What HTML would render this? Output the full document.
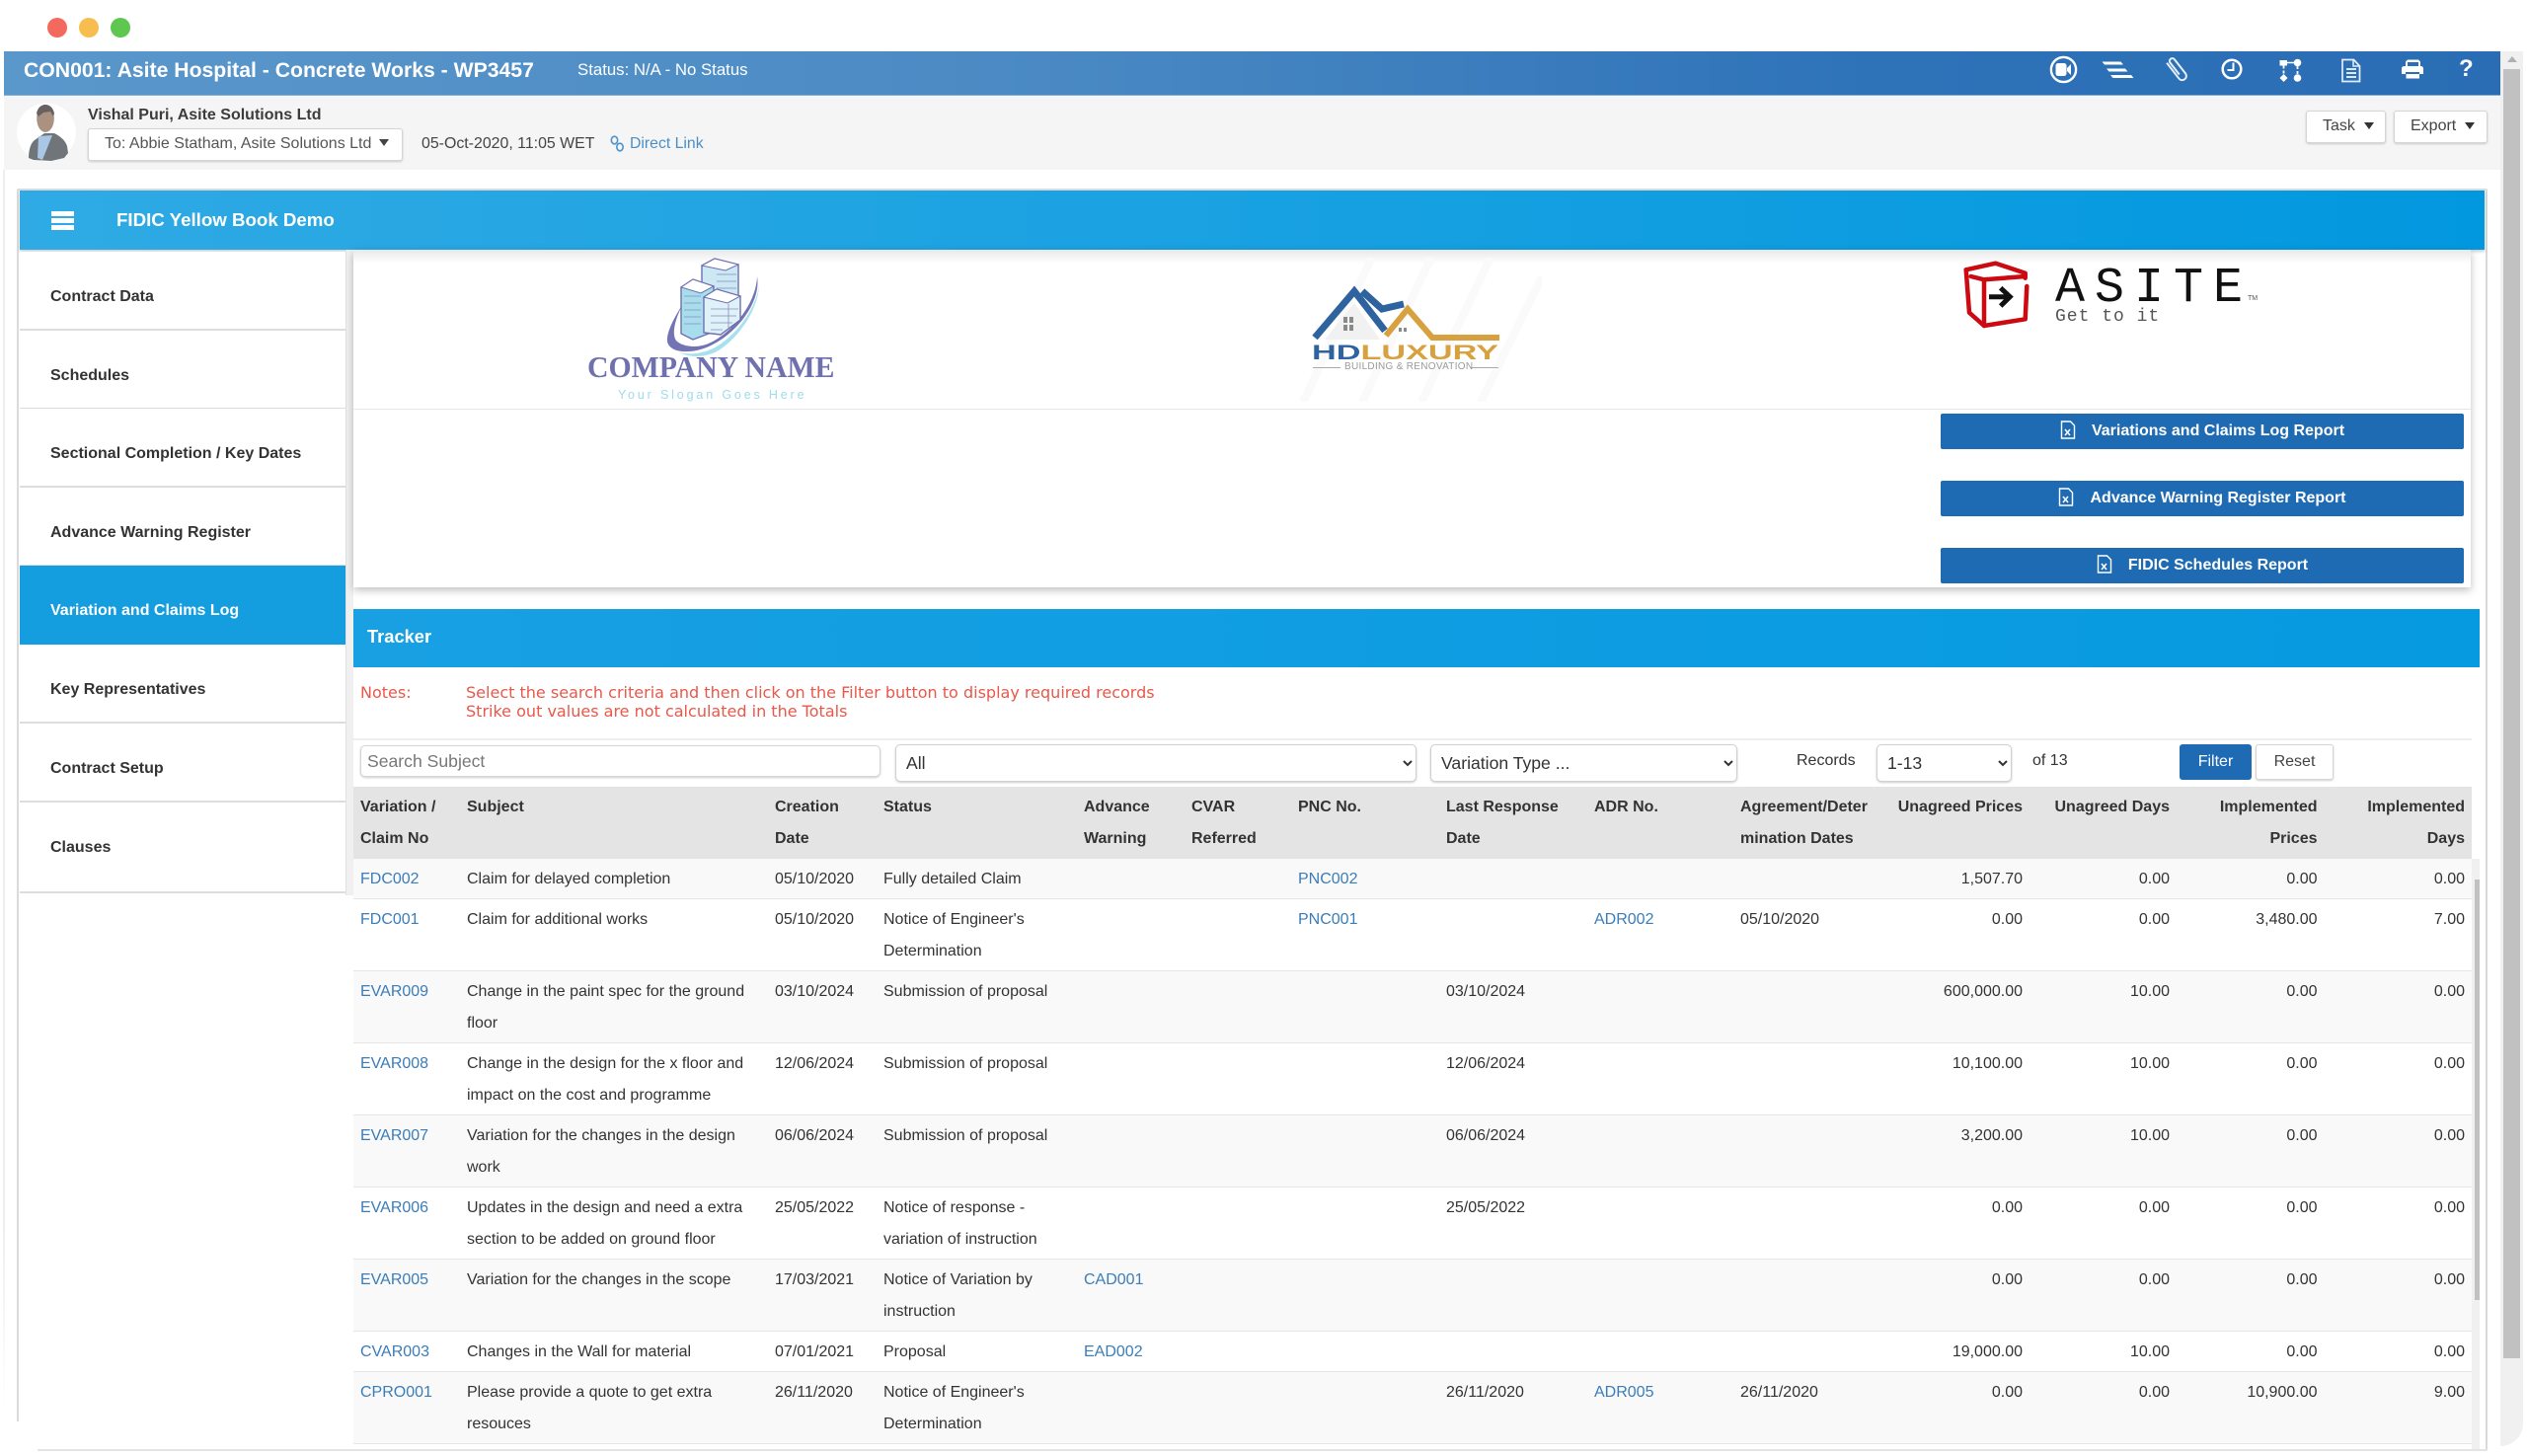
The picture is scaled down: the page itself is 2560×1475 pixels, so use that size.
<!DOCTYPE html>
<html lang="en"><head><meta charset="utf-8"><title>Asite Hospital - Concrete Works</title>
<style>
*{box-sizing:border-box}
html,body{margin:0;padding:0;background:#fff}
body{width:2560px;height:1475px;position:relative;overflow:hidden;font-family:"Liberation Sans",Arial,sans-serif;font-size:16px;color:#333;filter:blur(.35px)}
.a{position:absolute;white-space:nowrap}
a{color:#3a7db8;text-decoration:none}
.caret{display:inline-block;width:0;height:0;border-left:5.5px solid transparent;border-right:5.5px solid transparent;border-top:7px solid #333}
.wbtn{position:absolute;background:#fff;border:1px solid #d5d5d5;border-radius:3px;box-shadow:0 1px 2px rgba(0,0,0,.18)}
.side{position:absolute;left:20px;width:330px;height:80px;border-bottom:2px solid #ddd;font-weight:700;font-size:16px;padding-left:31px;color:#333;background:#fff;padding-top:19px;line-height:54px}
.rb{position:absolute;left:1966px;width:530px;height:36px;background:#1f6bb3;border-radius:2px;color:#fff;font-weight:700;font-size:16px;line-height:36px;text-align:center}
.rb svg{vertical-align:-4px;margin-right:16px}
select{font-family:"Liberation Sans",Arial,sans-serif;font-size:17.6px;color:#333;background:#fff;border:1px solid #d0d0d0;border-radius:5px;box-shadow:0 1px 2px rgba(0,0,0,.2);position:absolute;padding-left:6px}
table{position:absolute;left:358px;top:797px;width:2146px;border-collapse:collapse;table-layout:fixed;font-size:16px}
th,td{padding:5px 7px 3px;line-height:32px;text-align:left;vertical-align:top;white-space:nowrap;overflow:hidden}
th{background:#e4e4e4;font-weight:700;height:73px;padding-bottom:4px}
td{border-bottom:1px solid #e6e6e6}
tr.s td{background:#f9f9f9}
.r{text-align:right}
</style></head><body>

<!-- window dots -->
<div class="a" style="left:48px;top:18px;width:20px;height:20px;border-radius:50%;background:#f3695d"></div>
<div class="a" style="left:80px;top:18px;width:20px;height:20px;border-radius:50%;background:#f7bd4f"></div>
<div class="a" style="left:112px;top:18px;width:20px;height:20px;border-radius:50%;background:#5dc750"></div>

<!-- outer left fade line -->
<div class="a" style="left:3px;top:172px;width:2px;height:1260px;background:linear-gradient(#eee 85%,#fff)"></div>

<!-- top blue header -->
<div class="a" style="left:4px;top:52px;width:2530px;height:45px;background:linear-gradient(90deg,#5a97cb,#4b8ac4 40%,#2e72b8 75%,#2a6db4);border-bottom:1px solid #7fb0dc"></div>
<div class="a" style="left:24px;top:59px;color:#fff;font-weight:700;font-size:21.2px;line-height:26px">CON001: Asite Hospital - Concrete Works - WP3457</div>
<div class="a" style="left:585px;top:60px;color:#fff;font-size:16.8px;line-height:22px">Status: N/A - No Status</div>

<svg class="a" style="left:2070px;top:52px" width="450" height="44" viewBox="0 0 450 44">
 <circle cx="20.5" cy="18.5" r="12.6" fill="none" stroke="#fff" stroke-width="2.4"/>
 <rect x="12.5" y="12" width="11" height="13" rx="2.5" fill="#fff"/><path d="M24 17l4-4v11l-4-4z" fill="#fff"/>
 <path d="M59.5 10.5h19l2.500 3h-19zM64 17.500h19l2.500 3h-19zM68 24h21l2.500 3h-21z" fill="#fff"/>
 <g transform="rotate(-38 135 18)" fill="none" stroke="#e6eff8" stroke-width="2"><path d="M131 7v20a4.200 4.200 0 0 0 8.400 0V9a2.800 2.800 0 0 0-5.600 0v15"/></g>
 <circle cx="191" cy="18" r="9.300" fill="none" stroke="#fff" stroke-width="2.500"/><path d="M192.500 11.500v7.500h-6" fill="none" stroke="#fff" stroke-width="2"/>
 <rect x="239.500" y="9" width="7.500" height="5.500" fill="#fff"/><circle cx="257.500" cy="11.500" r="3.800" fill="#fff"/><path d="M247 11.500h7" stroke="#fff" stroke-width="1.500"/>
 <path d="M243.500 14.500v9M257.500 15v8" stroke="#fff" stroke-width="1.800" stroke-dasharray="3 2"/>
 <path d="M243.500 23l4 4-4 4-4-4z" fill="#fff"/><circle cx="257.500" cy="27" r="3.800" fill="#fff"/>
 <path d="M303 8.500h11.500l6 6.500v15.500h-17.500z" fill="none" stroke="#e4eef8" stroke-width="1.700"/><path d="M314 8.500v6.500h6.500" fill="none" stroke="#e4eef8" stroke-width="1.500"/>
 <path d="M307 17h10v2h-10zM307 21h10v2h-10zM307 25h10v2h-10z" fill="#dce9f5"/>
 <path d="M369 8.500h11l2 2v6h-2v-5.500h-11v5.500h-2v-6zM363 17.500c0-2 1.500-2.500 3-2.500h16c2 0 3 .8 3 2.500v5.500h-4v-2h-14v2h-4zM367.500 23h13.500v4.500h-13.500z" fill="#fff"/>
</svg>
<div class="a" style="left:2491px;top:55px;color:#fff;font-weight:700;font-size:24px;line-height:30px">?</div>

<!-- gray bar -->
<div class="a" style="left:4px;top:97px;width:2531px;height:75px;background:#f5f5f5"></div>
<svg class="a" style="left:16px;top:104px" width="62" height="62" viewBox="0 0 62 62">
 <ellipse cx="31" cy="30" rx="30" ry="29.500" fill="#fff"/>
 <path d="M13 56c0-8 2-15 6-18l10-7h10c6 3 11 7 13 13l1 7-4 5-13 3-18-1z" fill="#6f7579"/>
 <path d="M23 34l14-1-10 25-5-2z" fill="#a9c6e4"/>
 <ellipse cx="30" cy="16" rx="8.800" ry="14" fill="#ab917f"/>
 <path d="M21 11c1-6 5-9 9-9s8 3 9 9l-1 3-3-5-7 1-5 4z" fill="#67625f"/>
</svg>
<div class="a" style="left:89px;top:106px;font-weight:700;font-size:16px;line-height:22px;color:#3c3c3c">Vishal Puri, Asite Solutions Ltd</div>
<div class="wbtn" style="left:89px;top:130px;width:319px;height:33px"></div>
<div class="a" style="left:106px;top:135px;font-size:16px;line-height:22px;color:#555">To: Abbie Statham, Asite Solutions Ltd</div>
<span class="caret a" style="left:384px;top:141px;border-top-color:#444"></span>
<div class="a" style="left:427px;top:135px;font-size:15.9px;line-height:22px;color:#444">05-Oct-2020, 11:05 WET</div>
<svg class="a" style="left:618px;top:137px" width="15" height="17" viewBox="0 0 15 17"><g fill="none" stroke="#4e93c9" stroke-width="1.600"><ellipse cx="4.500" cy="5" rx="3.200" ry="3.800"/><ellipse cx="10" cy="12" rx="3.200" ry="3.800"/></g></svg>
<a class="a" style="left:638px;top:135px;font-size:15.8px;line-height:22px;color:#4a8fc6" href="#">Direct Link</a>
<div class="wbtn" style="left:2336px;top:112px;width:81px;height:33px"></div>
<div class="a" style="left:2353px;top:117px;line-height:22px;color:#444">Task</div>
<span class="caret a" style="left:2395px;top:124px"></span>
<div class="wbtn" style="left:2425px;top:112px;width:95px;height:33px"></div>
<div class="a" style="left:2442px;top:117px;line-height:22px;color:#444">Export</div>
<span class="caret a" style="left:2497px;top:124px"></span>

<!-- page scrollbar -->
<div class="a" style="left:2533px;top:52px;width:23px;height:1413px;background:#f0f0f0;border-radius:0 0 24px 0"></div>
<div class="a" style="left:2536px;top:70px;width:17px;height:1306px;background:#c1c1c1"></div>
<div class="a" style="left:2540px;top:57px;width:0;height:0;border-left:5px solid transparent;border-right:5px solid transparent;border-bottom:6px solid #b0b0b0"></div>

<!-- main frame -->
<div class="a" style="left:17px;top:191px;width:2503px;height:1279px;border:2px solid #dadada;border-bottom:0;border-radius:2px"></div>
<div class="a" style="left:37px;top:1468px;width:2483px;height:2px;background:#e4e4e4"></div>
<div class="a" style="left:16px;top:1440px;width:22px;height:32px;background:#fff"></div>
<div class="a" style="left:20px;top:193px;width:2497px;height:60px;background:linear-gradient(90deg,#2faae4,#0298df);box-shadow:0 2px 3px rgba(0,0,0,.2)"></div>
<div class="a" style="left:52px;top:214px;width:23px;height:5px;background:#fff"></div>
<div class="a" style="left:52px;top:221px;width:23px;height:5px;background:#fff"></div>
<div class="a" style="left:52px;top:228px;width:23px;height:5px;background:#fff"></div>
<div class="a" style="left:118px;top:211px;color:#fff;font-weight:700;font-size:18.7px;line-height:24px">FIDIC Yellow Book Demo</div>

<!-- sidebar -->
<div class="side" style="top:255px">Contract Data</div>
<div class="side" style="top:335px">Schedules</div>
<div class="side" style="top:414px">Sectional Completion / Key Dates</div>
<div class="side" style="top:494px">Advance Warning Register</div>
<div class="side" style="top:573px;background:#149ee0;color:#fff;border-bottom:0">Variation and Claims Log</div>
<div class="side" style="top:653px">Key Representatives</div>
<div class="side" style="top:733px">Contract Setup</div>
<div class="side" style="top:813px;height:92px">Clauses</div>
<div class="a" style="left:350px;top:253px;width:8px;height:654px;background:#f0f0f0;border-left:1px solid #e2e2e2"></div>

<!-- top card -->
<div class="a" style="left:358px;top:253px;width:2145px;height:342px;background:#fff;box-shadow:0 3px 8px rgba(0,0,0,.25)"></div>
<div class="a" style="left:358px;top:253px;width:2145px;height:14px;background:linear-gradient(#e8e8e8,#fff)"></div>
<div class="a" style="left:358px;top:414px;width:2145px;height:1px;background:#e6e6e6"></div>

<!-- company logo -->
<svg class="a" style="left:660px;top:258px" width="120" height="104" viewBox="0 0 120 104">
 <path d="M107 22C106 50 82 78 60 89c-12 6-28 5-35-2C20 80 24 64 33 48 24 62 15 78 16 88c2 9 14 12 30 9 32-7 66-45 61-75z" fill="#7474b4"/>
 <path d="M28 99c12 3 26 1 38-6 20-12 40-38 43-62-1 26-22 54-41 66-12 7-28 8-40 2z" fill="#a6e2ee"/>
 <path d="M51 11l13-7 24 6v56l-37 14z" fill="#cbe8f3" stroke="#6e6fb0" stroke-width="1.400"/>
 <path d="M51 11l13-7 24 6-13 6z" fill="#fff" stroke="#6e6fb0"/>
 <path d="M30 33l12-8 21 7v46l-21 8-12-6z" fill="#a8ddec" stroke="#6e6fb0" stroke-width="1.400"/>
 <path d="M30 33l12-8 21 7-13 7z" fill="#fff" stroke="#6e6fb0"/>
 <path d="M53 43l13-8 24 7v24l-20 15-17-2z" fill="#dff2f8" stroke="#6e6fb0" stroke-width="1.400"/>
 <path d="M53 43l13-8 24 7-13 7z" fill="#fff" stroke="#6e6fb0"/>
 <path d="M33 42h17M33 49h17M33 56h17M33 63h17M33 70h17M66 20h20M66 27h20M66 34h20M60 55h28M60 62h26M60 69h22M60 76h12M78 50v24" stroke="#8a8ac2" stroke-width=".8"/>
</svg>
<div class="a" style="left:595px;top:354px;font-family:'Liberation Serif',serif;font-weight:700;font-size:31px;line-height:36px;color:#6f70ae;transform:scaleX(.96);transform-origin:0 0">COMPANY NAME</div>
<div class="a" style="left:626px;top:392px;font-size:12.5px;line-height:16px;color:#9edbec;letter-spacing:2.85px">Your Slogan Goes Here</div>

<!-- HD Luxury logo -->
<svg class="a" style="left:1300px;top:261px" width="262" height="146" viewBox="0 0 262 146">
 <g stroke="#fafafa" stroke-width="8"><path d="M20 146L90 0M80 146L150 0M140 146L210 0M200 146L262 20"/></g>
 <path d="M42 83L72 46l26 37z" fill="#f1f1f1"/>
 <path d="M32 81L72 34 103 74" fill="none" stroke="#2e639f" stroke-width="7"/>
 <path d="M80 34l20 18 22-5" fill="none" stroke="#2e639f" stroke-width="7"/>
 <path d="M104 79l22-27 25 29h68" fill="none" stroke="#d8a13f" stroke-width="6"/>
 <path d="M61 60h4v6h-4zM67 60h4v6h-4zM61 68h4v6h-4zM67 68h4v6h-4zM117 71h3v4h-3zM122 71h3v4h-3z" fill="#8a8a8a"/>
</svg>
<div class="a" style="left:1329px;top:345px;font-weight:700;font-size:21px;line-height:26px;color:#2e639f;transform:scaleX(1.63);transform-origin:0 0">HD<span style="color:#d8a13f">LUXURY</span></div>
<div class="a" style="left:1330px;top:372px;width:28px;height:1px;background:#aaa"></div>
<div class="a" style="left:1490px;top:372px;width:28px;height:1px;background:#aaa"></div>
<div class="a" style="left:1362px;top:366px;font-size:10px;line-height:12px;letter-spacing:.3px;color:#9a9a9a">BUILDING &amp; RENOVATION</div>

<!-- Asite logo -->
<svg class="a" style="left:1988px;top:264px" width="72" height="70" viewBox="0 0 72 70">
 <g fill="none" stroke="#cc0a12" stroke-width="4.500" stroke-linejoin="round" stroke-linecap="round">
 <path d="M3.700 9.300L33.700 2.700 63.700 12.700V17.700"/><path d="M3.700 9.300L7 52.700 22 66"/><path d="M8.700 16L22 19.300 63.700 16"/><path d="M22 19.300V66L63.700 59.300 65.300 26"/></g>
 <path d="M27 36.700h21" stroke="#111" stroke-width="5"/><path d="M38.700 27.700l9.500 9-9.500 9.300" fill="none" stroke="#111" stroke-width="5"/>
</svg>
<div class="a" style="left:2082px;top:263px;font-family:'Liberation Mono',monospace;font-size:50px;line-height:60px;letter-spacing:10px;color:#111">ASITE</div>
<div class="a" style="left:2277px;top:298px;font-size:7px;line-height:10px;color:#555">TM</div>
<div class="a" style="left:2082px;top:309px;font-family:'Liberation Mono',monospace;font-size:18px;line-height:24px;letter-spacing:1px;color:#555">Get to it</div>

<!-- report buttons -->
<div class="rb" style="top:419px"><svg width="16" height="19" viewBox="0 0 16 19"><path d="M1.500 1h9l4 4v13h-13z" fill="none" stroke="#fff" stroke-width="1.400"/><path d="M5 9l5 6M10 9l-5 6" stroke="#fff" stroke-width="1.500"/></svg>Variations and Claims Log Report</div>
<div class="rb" style="top:487px"><svg width="16" height="19" viewBox="0 0 16 19"><path d="M1.500 1h9l4 4v13h-13z" fill="none" stroke="#fff" stroke-width="1.400"/><path d="M5 9l5 6M10 9l-5 6" stroke="#fff" stroke-width="1.500"/></svg>Advance Warning Register Report</div>
<div class="rb" style="top:555px"><svg width="16" height="19" viewBox="0 0 16 19"><path d="M1.500 1h9l4 4v13h-13z" fill="none" stroke="#fff" stroke-width="1.400"/><path d="M5 9l5 6M10 9l-5 6" stroke="#fff" stroke-width="1.500"/></svg>FIDIC Schedules Report</div>

<!-- tracker -->
<div class="a" style="left:358px;top:617px;width:2154px;height:59px;background:linear-gradient(90deg,#18a0e3,#069ae0)"></div>
<div class="a" style="left:372px;top:633px;color:#fff;font-weight:700;font-size:18.3px;line-height:24px">Tracker</div>

<div class="a" style="left:365px;top:692px;font-family:'DejaVu Sans',sans-serif;font-size:16px;line-height:20px;color:#e8584b">Notes:</div>
<div class="a" style="left:472px;top:692px;font-family:'DejaVu Sans',sans-serif;font-size:16.03px;line-height:19px;color:#e8584b">Select the search criteria and then click on the Filter button to display required records<br>Strike out values are not calculated in the Totals</div>
<div class="a" style="left:358px;top:748px;width:2146px;height:2px;background:#eee"></div>

<!-- filters -->
<div class="wbtn" style="left:365px;top:755px;width:527px;height:32px;border-radius:5px;box-shadow:0 1px 2px rgba(0,0,0,.2)"></div>
<div class="a" style="left:372px;top:760px;font-size:17.6px;line-height:22px;color:#777">Search Subject</div>
<select style="left:907px;top:754px;width:528px;height:38px"><option>All</option></select>
<select style="left:1449px;top:754px;width:311px;height:38px"><option>Variation Type ...</option></select>
<div class="a" style="left:1820px;top:760px;line-height:22px">Records</div>
<select style="left:1901px;top:754px;width:137px;height:38px"><option>1-13</option></select>
<div class="a" style="left:2059px;top:760px;line-height:22px">of 13</div>
<div class="a" style="left:2208px;top:754px;width:73px;height:36px;background:#1f6bb3;border-radius:3px;color:#fff;text-align:center;line-height:35px">Filter</div>
<div class="wbtn" style="left:2285px;top:754px;width:79px;height:36px;text-align:center;line-height:34px;color:#444">Reset</div>

<!-- table -->
<table>
<colgroup><col style="width:108px"><col style="width:312px"><col style="width:110px"><col style="width:203px"><col style="width:109px"><col style="width:108px"><col style="width:150px"><col style="width:150px"><col style="width:148px"><col style="width:151px"><col style="width:149px"><col style="width:149px"><col style="width:149.5px"><col style="width:149.5px"></colgroup>
<tr><th>Variation /<br>Claim No</th><th>Subject</th><th>Creation<br>Date</th><th>Status</th><th>Advance<br>Warning</th><th>CVAR<br>Referred</th><th>PNC No.</th><th>Last Response<br>Date</th><th>ADR No.</th><th>Agreement/Deter<br>mination Dates</th><th class="r">Unagreed Prices</th><th class="r">Unagreed Days</th><th class="r">Implemented<br>Prices</th><th class="r">Implemented<br>Days</th></tr>
<tr class="s"><td><a href="#">FDC002</a></td><td>Claim for delayed completion</td><td>05/10/2020</td><td>Fully detailed Claim</td><td></td><td></td><td><a href="#">PNC002</a></td><td></td><td></td><td></td><td class="r">1,507.70</td><td class="r">0.00</td><td class="r">0.00</td><td class="r">0.00</td></tr>
<tr><td><a href="#">FDC001</a></td><td>Claim for additional works</td><td>05/10/2020</td><td>Notice of Engineer's<br>Determination</td><td></td><td></td><td><a href="#">PNC001</a></td><td></td><td><a href="#">ADR002</a></td><td>05/10/2020</td><td class="r">0.00</td><td class="r">0.00</td><td class="r">3,480.00</td><td class="r">7.00</td></tr>
<tr class="s"><td><a href="#">EVAR009</a></td><td>Change in the paint spec for the ground<br>floor</td><td>03/10/2024</td><td>Submission of proposal</td><td></td><td></td><td></td><td>03/10/2024</td><td></td><td></td><td class="r">600,000.00</td><td class="r">10.00</td><td class="r">0.00</td><td class="r">0.00</td></tr>
<tr><td><a href="#">EVAR008</a></td><td>Change in the design for the x floor and<br>impact on the cost and programme</td><td>12/06/2024</td><td>Submission of proposal</td><td></td><td></td><td></td><td>12/06/2024</td><td></td><td></td><td class="r">10,100.00</td><td class="r">10.00</td><td class="r">0.00</td><td class="r">0.00</td></tr>
<tr class="s"><td><a href="#">EVAR007</a></td><td>Variation for the changes in the design<br>work</td><td>06/06/2024</td><td>Submission of proposal</td><td></td><td></td><td></td><td>06/06/2024</td><td></td><td></td><td class="r">3,200.00</td><td class="r">10.00</td><td class="r">0.00</td><td class="r">0.00</td></tr>
<tr><td><a href="#">EVAR006</a></td><td>Updates in the design and need a extra<br>section to be added on ground floor</td><td>25/05/2022</td><td>Notice of response -<br>variation of instruction</td><td></td><td></td><td></td><td>25/05/2022</td><td></td><td></td><td class="r">0.00</td><td class="r">0.00</td><td class="r">0.00</td><td class="r">0.00</td></tr>
<tr class="s"><td><a href="#">EVAR005</a></td><td>Variation for the changes in the scope</td><td>17/03/2021</td><td>Notice of Variation by<br>instruction</td><td><a href="#">CAD001</a></td><td></td><td></td><td></td><td></td><td></td><td class="r">0.00</td><td class="r">0.00</td><td class="r">0.00</td><td class="r">0.00</td></tr>
<tr><td><a href="#">CVAR003</a></td><td>Changes in the Wall for material</td><td>07/01/2021</td><td>Proposal</td><td><a href="#">EAD002</a></td><td></td><td></td><td></td><td></td><td></td><td class="r">19,000.00</td><td class="r">10.00</td><td class="r">0.00</td><td class="r">0.00</td></tr>
<tr class="s"><td><a href="#">CPRO001</a></td><td>Please provide a quote to get extra<br>resouces</td><td>26/11/2020</td><td>Notice of Engineer's<br>Determination</td><td></td><td></td><td></td><td>26/11/2020</td><td><a href="#">ADR005</a></td><td>26/11/2020</td><td class="r">0.00</td><td class="r">0.00</td><td class="r">10,900.00</td><td class="r">9.00</td></tr>
</table>

<!-- table scrollbar -->
<div class="a" style="left:2504px;top:870px;width:8px;height:598px;background:#f0f0f0"></div>
<div class="a" style="left:2507px;top:891px;width:5px;height:426px;background:#c1c1c1"></div>
</body></html>
